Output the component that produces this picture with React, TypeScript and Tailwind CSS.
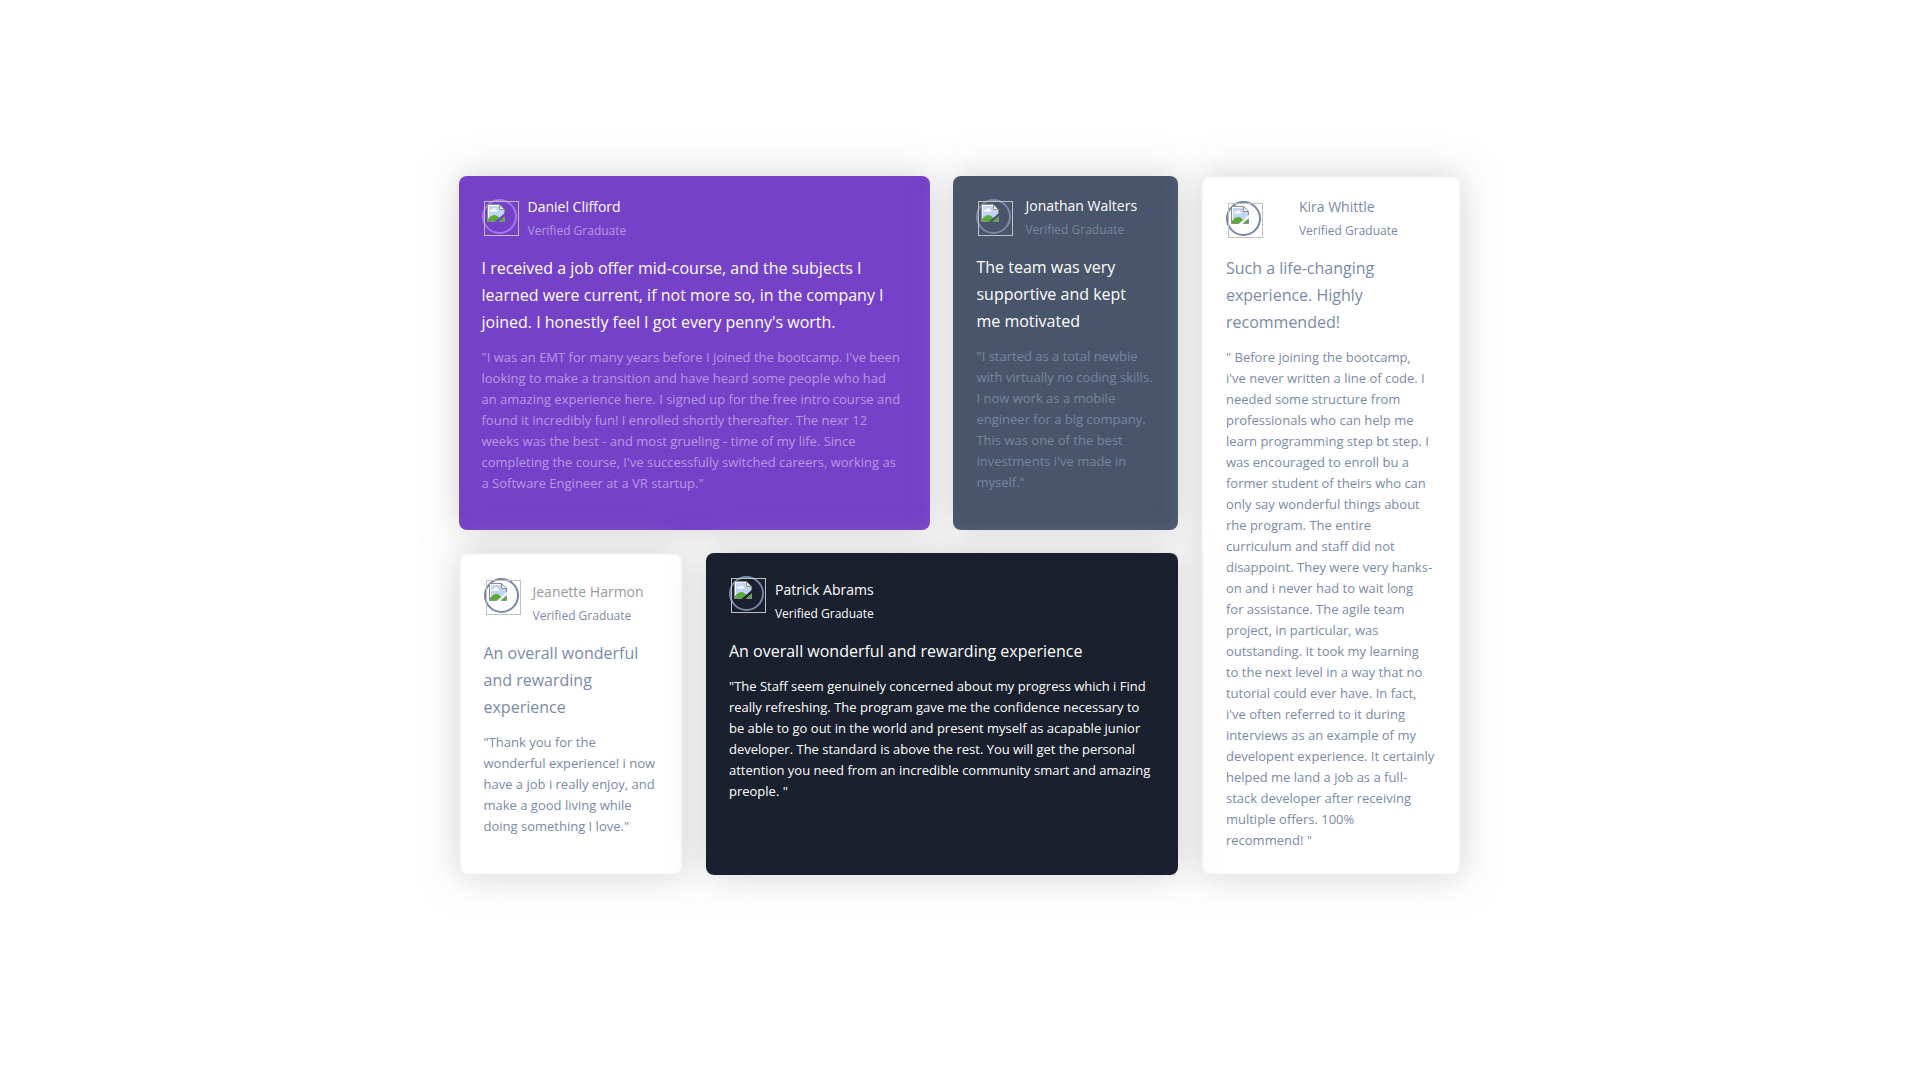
import type { ReactNode } from "react";

function Avatar({ ring, cut, place }: { ring: string; cut: string; place: string }) {
  return (
    <svg width="37" height="37" viewBox="0 0 37 37" fill="none" className={`shrink-0 ${place}`} role="img" aria-label="Graduate photo">
      <circle cx="17.5" cy="17.5" r="16.5" stroke={ring} strokeWidth="2" />
      <rect x="2.5" y="2.5" width="34" height="34" stroke="#c0c0c0" />
      <path d="M5.500 5.500H17.500l5 5v12H5.500z" fill="#c3d5f7" stroke="#8e8e8e" />
      <path d="M6.500 21V6.500H17" stroke="#fff" />
      <path d="M17.500 5.500V10.500H22.500z" fill="#fff" stroke="#8e8e8e" />
      <path d="M8 12.500c0-2 2-2 2.500-1.500C11 8.500 14 9 14 11c1.500 0 1.500 1.500.5 1.500z" fill="#fff" />
      <path d="M6 22v-2c3-3.500 6-5 8.500-3.500L19 20l3 2z" fill="#57ab3a" />
      <path d="M24 13v4l-7.500 6.500H12z" fill={cut} />
      <path d="M22.500 17.500v5H17z" fill="#57ab3a" stroke="#8e8e8e" strokeWidth="0.5" />
    </svg>
  );
}

type CardProps = {
  name: string;
  box: string;
  ring: string;
  cut: string;
  place: string;
  head: string;
  nameColor: string;
  roleColor: string;
  title: string[];
  titleColor: string;
  body: string[];
  bodyColor: string;
};

function Lines({ rows }: { rows: string[] }): ReactNode {
  return rows.map((r) => (
    <span key={r} className="block whitespace-nowrap">
      {r}{" "}
    </span>
  ));
}

function Card(p: CardProps) {
  return (
    <article className={`rounded-lg px-[23px] pb-[22px] shadow-[0_0_36px_rgba(185,185,185,0.65)] ${p.box}`}>
      <header className={`flex items-start ${p.head}`}>
        <Avatar ring={p.ring} cut={p.cut} place={p.place} />
        <div>
          <h2 className={`text-[14px] leading-6 ${p.nameColor}`}>{p.name}</h2>
          <p className={`text-[12px] leading-6 ${p.roleColor}`}>Verified Graduate</p>
        </div>
      </header>
      <h3 className={`mt-3 text-[16px] leading-[27px] ${p.titleColor}`}>
        <Lines rows={p.title} />
      </h3>
      <p className={`mt-[11px] text-[13px] leading-[21px] ${p.bodyColor}`}>
        <Lines rows={p.body} />
      </p>
    </article>
  );
}

const cards: CardProps[] = [
  {
    name: "Daniel Clifford",
    box: "col-span-2 bg-[#7541c8] pt-[19px]",
    ring: "#a775f1",
    cut: "#7541c8",
    place: "mt-1",
    head: "gap-[9px]",
    nameColor: "text-white",
    roleColor: "text-[#b898e4]",
    title: ["I received a job offer mid-course, and the subjects I", "learned were current, if not more so, in the company I", "joined. I honestly feel I got every penny's worth."],
    titleColor: "text-white",
    body: [
      "\"I was an EMT for many years before I joined the bootcamp. I've been",
      "looking to make a transition and have heard some people who had",
      "an amazing experience here. I signed up for the free intro course and",
      "found it incredibly fun! I enrolled shortly thereafter. The nexr 12",
      "weeks was the best - and most grueling - time of my life. Since",
      "completing the course, I've successfully switched careers, working as",
      "a Software Engineer at a VR startup.\"",
    ],
    bodyColor: "text-[#b898e4]",
  },
  {
    name: "Jonathan Walters",
    box: "bg-[#49556b] pt-[18px]",
    ring: "#7b8aa8",
    cut: "#49556b",
    place: "mt-[5px]",
    head: "gap-3",
    nameColor: "text-white",
    roleColor: "text-[#7586a2]",
    title: ["The team was very", "supportive and kept", "me motivated"],
    titleColor: "text-white",
    body: ["\"I started as a total newbie", "with virtually no coding skills.", "I now work as a mobile", "engineer for a big company.", "This was one of the best", "investments i've made in", "myself.\""],
    bodyColor: "text-[#7586a2]",
  },
  {
    name: "Kira Whittle",
    box: "row-span-2 border-2 border-[#f3f3f3] bg-white pt-[17px]",
    ring: "#7586a8",
    cut: "#ffffff",
    place: "mt-[6px]",
    head: "gap-9",
    nameColor: "text-[#7b8aa5]",
    roleColor: "text-[#7b8aa5]",
    title: ["Such a life-changing", "experience. Highly", "recommended!"],
    titleColor: "text-[#7b8aa5]",
    body: [
      "\" Before joining the bootcamp,",
      "i've never written a line of code. I",
      "needed some structure from",
      "professionals who can help me",
      "learn programming step bt step. I",
      "was encouraged to enroll bu a",
      "former student of theirs who can",
      "only say wonderful things about",
      "rhe program. The entire",
      "curriculum and staff did not",
      "disappoint. They were very hanks-",
      "on and i never had to wait long",
      "for assistance. The agile team",
      "project, in particular, was",
      "outstanding. It took my learning",
      "to the next level in a way that no",
      "tutorial could ever have. In fact,",
      "i've often referred to it during",
      "interviews as an example of my",
      "developent experience. It certainly",
      "helped me land a job as a full-",
      "stack developer after receiving",
      "multiple offers. 100%",
      "recommend! \"",
    ],
    bodyColor: "text-[#7b8aa5]",
  },
  {
    name: "Jeanette Harmon",
    box: "border-2 border-[#f3f3f3] bg-white pt-[25px]",
    ring: "#7586a8",
    cut: "#ffffff",
    place: "-mt-0.5",
    head: "gap-3",
    nameColor: "text-[#9a9a9a]",
    roleColor: "text-[#7b8aa5]",
    title: ["An overall wonderful", "and rewarding", "experience"],
    titleColor: "text-[#7b8aa5]",
    body: ["\"Thank you for the", "wonderful experience! i now", "have a job i really enjoy, and", "make a good living while", "doing something I love.\""],
    bodyColor: "text-[#7b8aa5]",
  },
  {
    name: "Patrick Abrams",
    box: "col-span-2 bg-[#1a202d] pt-[25px]",
    ring: "#7586a8",
    cut: "#1a202d",
    place: "-mt-0.5",
    head: "gap-[9px]",
    nameColor: "text-white",
    roleColor: "text-white",
    title: ["An overall wonderful and rewarding experience"],
    titleColor: "text-white",
    body: [
      "\"The Staff seem genuinely concerned about my progress which i Find",
      "really refreshing. The program gave me the confidence necessary to",
      "be able to go out in the world and present myself as acapable junior",
      "developer. The standard is above the rest. You will get the personal",
      "attention you need from an incredible community smart and amazing",
      "preople. \"",
    ],
    bodyColor: "text-white",
  },
];

export default function App() {
  return (
    <main className="min-h-screen bg-white px-6 py-44 font-['Open_Sans','Noto_Sans',sans-serif]">
      <div className="mx-auto grid max-w-[1003px] grid-cols-[224fr_224fr_224fr_260fr] grid-rows-[354px_auto] gap-[23px]">
        {cards.map((c) => (
          <Card key={c.name} {...c} />
        ))}
      </div>
    </main>
  );
}
